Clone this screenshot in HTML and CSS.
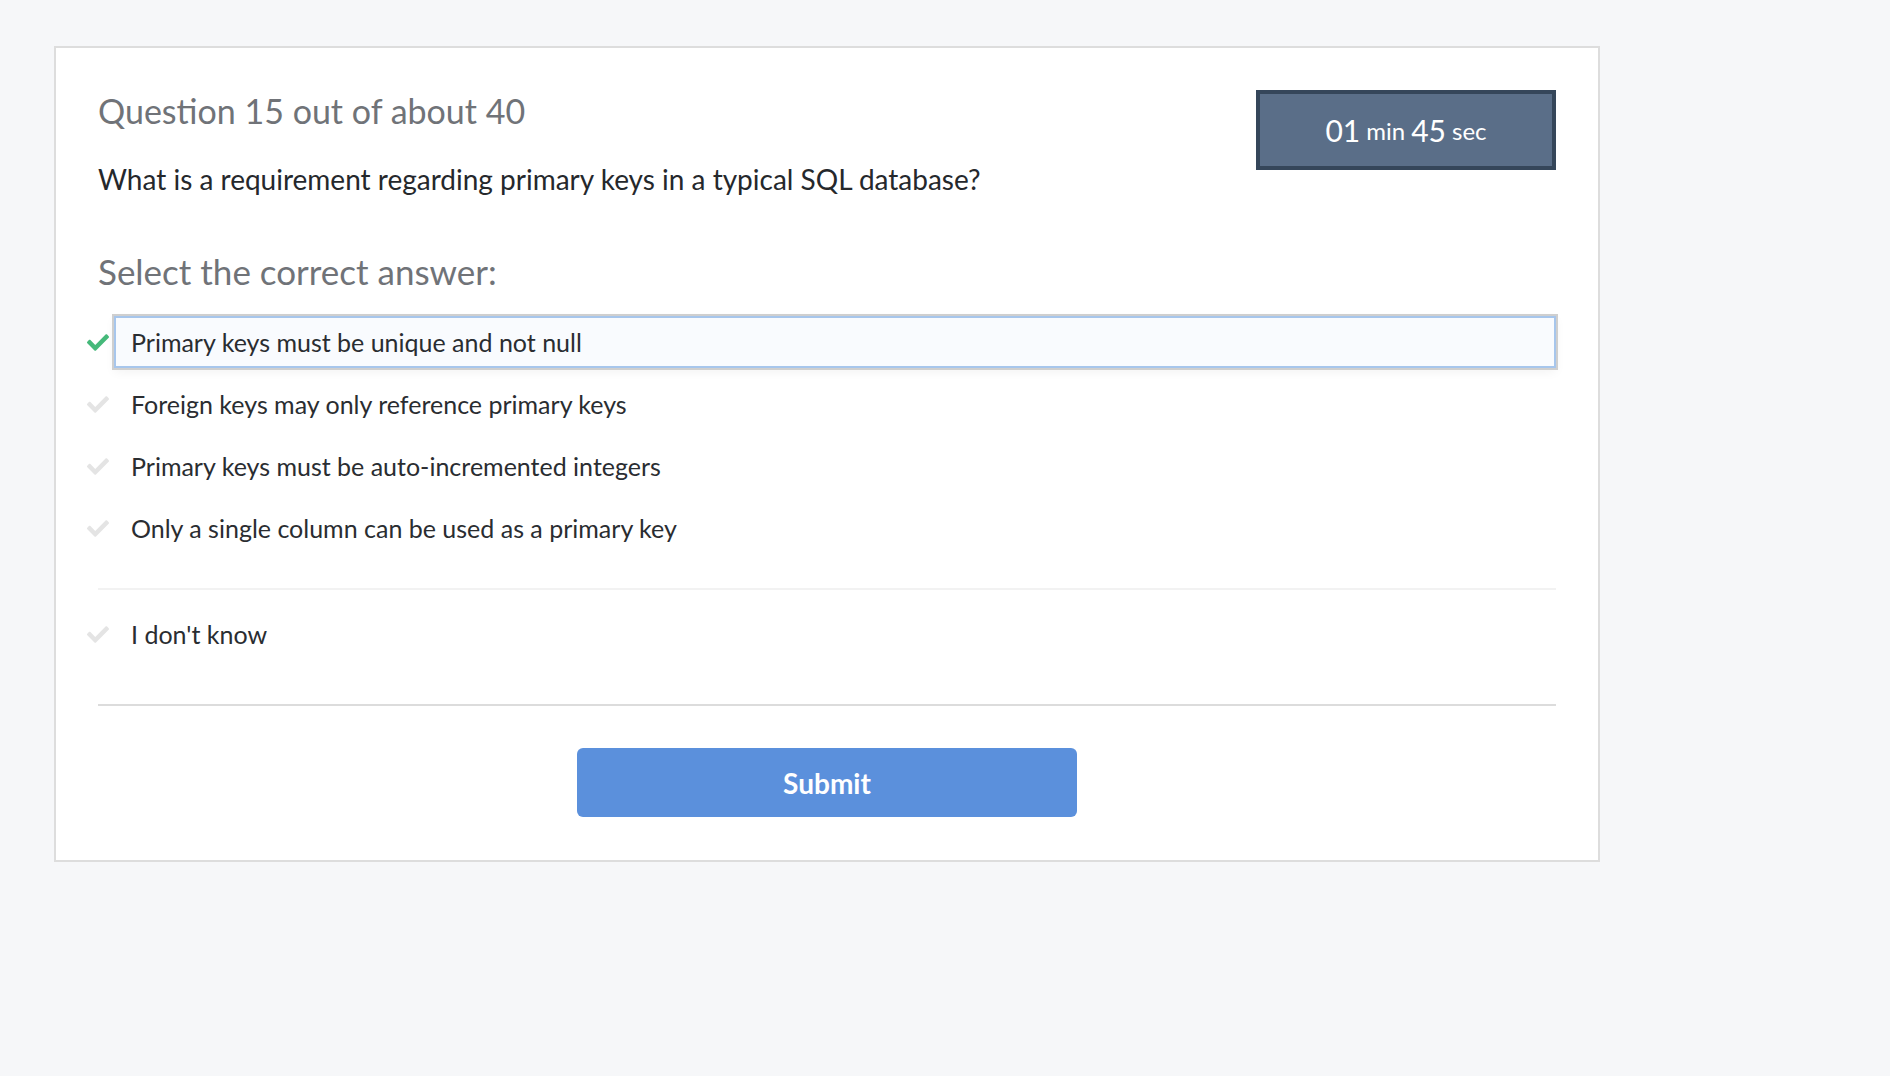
FILE: index.html
```html
<!DOCTYPE html>
<html>
<head>
<meta charset="utf-8">
<link rel="stylesheet" href="styles.css">
</head>
<body>
<svg width="0" height="0" class="defs">
  <defs>
    <symbol id="check" viewBox="0 40 512 432">
      <path d="M173.898 439.404l-166.4-166.4c-9.997-9.997-9.997-26.206 0-36.204l36.203-36.204c9.997-9.998 26.207-9.998 36.204 0L192 312.69 432.095 72.596c9.997-9.997 26.207-9.997 36.204 0l36.203 36.204c9.997 9.997 9.997 26.206 0 36.204l-294.4 294.401c-9.998 9.997-26.207 9.997-36.204-.001z"/>
    </symbol>
  </defs>
</svg>
<main class="card">
  <div class="header">
    <div class="header-text">
      <h1 class="title">Question 15 out of about 40</h1>
      <p class="question">What is a requirement regarding primary keys in a typical SQL database?</p>
    </div>
    <div class="timer"><span class="num">01</span> <span class="unit">min</span> <span class="num">45</span> <span class="unit">sec</span></div>
  </div>
  <h2 class="prompt">Select the correct answer:</h2>
  <ul class="options">
    <li class="option selected"><svg class="check"><use href="#check"/></svg><span class="label">Primary keys must be unique and not null</span></li>
    <li class="option"><svg class="check"><use href="#check"/></svg><span class="label">Foreign keys may only reference primary keys</span></li>
    <li class="option"><svg class="check"><use href="#check"/></svg><span class="label">Primary keys must be auto-incremented integers</span></li>
    <li class="option"><svg class="check"><use href="#check"/></svg><span class="label">Only a single column can be used as a primary key</span></li>
  </ul>
  <ul class="options dontknow">
    <li class="option"><svg class="check"><use href="#check"/></svg><span class="label">I don't know</span></li>
  </ul>
  <div class="actions">
    <button class="submit">Submit</button>
  </div>
</main>
</body>
</html>
```
FILE: styles.css
```css
* { box-sizing: border-box; }
html, body { margin: 0; padding: 0; }
body {
  background: #f6f7f9;
  font-family: Lato, "Noto Sans", sans-serif;
  padding: 46px 0 0 54px;
}
.defs { position: absolute; }
.card {
  width: 1546px;
  height: 816px;
  background: #fff;
  border: 2px solid #dddddd;
  padding: 42px 42px 42px 42px;
}
.header {
  display: flex;
  justify-content: space-between;
  align-items: flex-start;
}
.title {
  margin: 0;
  font-weight: 400;
  font-size: 34px;
  line-height: 42px;
  color: #707378;
}
.question {
  margin: 32px 0 0 0;
  font-size: 28px;
  line-height: 30px;
  color: #25282c;
}
.timer {
  width: 300px;
  height: 80px;
  background: #5a6e88;
  border: 4px solid #35465a;
  color: #fff;
  display: flex;
  align-items: center;
  justify-content: center;
  gap: 6px;
  white-space: pre;
}
.timer .num { font-size: 30px; }
.timer .unit { font-size: 24px; }
.prompt {
  margin: 57px 0 0 0;
  font-weight: 400;
  font-size: 35px;
  line-height: 40px;
  color: #707378;
}
.options {
  list-style: none;
  margin: 25px 0 0 -11px;
  padding: 0;
}
.option {
  display: flex;
  align-items: center;
  gap: 5px;
  margin-bottom: 10px;
}
.check {
  width: 22px;
  height: 19px;
  fill: #e4e4e4;
  flex: none;
}
.selected .check { fill: #45b97a; }
.label {
  flex: 1;
  height: 52px;
  display: flex;
  align-items: center;
  padding-left: 15px;
  border: 2px solid transparent;
  font-size: 25px;
  color: #2a2d31;
}
.selected .label {
  background: #f9fbfe;
  border-color: #a7c6ec;
  box-shadow: 0 0 0 2px #cfcfcf, 0 4px 10px rgba(0,0,0,0.05);
}
.options.dontknow {
  margin-top: 34px;
  padding-top: 18px;
  border-top: 2px solid #f2f2f2;
  margin-left: 0;
}
.dontknow .option { margin-left: -11px; margin-bottom: 0; }
.actions {
  margin-top: 44px;
  border-top: 2px solid #dcdcdc;
  padding-top: 42px;
  display: flex;
  justify-content: center;
}
.submit {
  width: 500px;
  height: 69px;
  background: #5b90dc;
  border: none;
  border-radius: 6px;
  color: #fff;
  font-family: Lato, "Noto Sans", sans-serif;
  font-weight: 700;
  font-size: 28px;
}
```
